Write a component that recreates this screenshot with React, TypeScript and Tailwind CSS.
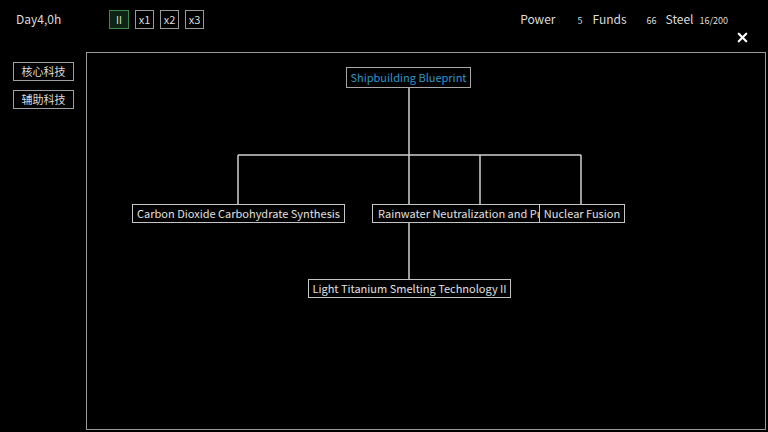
import { X } from "lucide-react";

type Node = {
  label: string;
  left: number;
  top: number;
  width: number;
  height: number;
  active?: boolean;
  align?: "left" | "center";
};

const nodes: Node[] = [
  { label: "Shipbuilding Blueprint", left: 259, top: 14, width: 125, height: 21, active: true },
  { label: "Carbon Dioxide Carbohydrate Synthesis", left: 45, top: 151, width: 213, height: 19 },
  { label: "Rainwater Neutralization and Purification", left: 285, top: 151, width: 175, height: 19, align: "left" },
  { label: "Nuclear Fusion", left: 452, top: 151, width: 86, height: 19 },
  { label: "Light Titanium Smelting Technology II", left: 221, top: 226, width: 203, height: 19 },
];

const speeds = ["x1", "x2", "x3"];

export default function App() {
  return (
    <div
      className="flex h-[432px] w-[768px] flex-col overflow-hidden bg-black text-[#dcdcdc]"
      style={{ fontFamily: '"Noto Sans CJK SC", "Noto Sans", sans-serif' }}
    >
      {/* top bar */}
      <div className="flex h-[38px] items-center">
        <span className="ml-[16px] w-[93px] text-[12px]">Day4,0h</span>
        <div className="flex gap-[6px]">
          <button className="flex h-[19px] w-[20px] items-center justify-center border border-[#3f8a4a] bg-[#0f2414] text-[10px] text-[#cfe6cf]">
            II
          </button>
          {speeds.map((s) => (
            <button
              key={s}
              className="flex h-[19px] w-[19px] items-center justify-center border border-[#9a9a9a] text-[11px]"
            >
              {s}
            </button>
          ))}
        </div>
        <div className="ml-auto mr-[40px] flex items-baseline text-[12px]">
          <span>Power</span>
          <span className="ml-[22px] text-[9px]">5</span>
          <span className="ml-[10px]">Funds</span>
          <span className="ml-[20px] text-[9px]">66</span>
          <span className="ml-[9px]">Steel</span>
          <span className="ml-[6px] text-[9px]">16/200</span>
        </div>
      </div>

      <div className="flex flex-1">
        {/* side tabs */}
        <div className="flex w-[86px] flex-col gap-[9px] pl-[13px] pt-[24px]">
          <button className="h-[19px] w-[61px] border border-[#a0a0a0] text-[11px]">核心科技</button>
          <button className="h-[19px] w-[61px] border border-[#a0a0a0] text-[11px]">辅助科技</button>
        </div>

        {/* tech tree panel */}
        <div className="relative flex-1 pt-[14px]">
          <X className="absolute right-[18px] top-[-8px] h-[15px] w-[15px] text-white" strokeWidth={3.5} />
          <div className="relative h-[378px] w-[680px] border border-[#9a9a9a]">
            <svg className="absolute left-0 top-0" width="678" height="376">
              <g stroke="#d0d0d0" strokeWidth="1.5" fill="none">
                <line x1="322" y1="34" x2="322" y2="102" />
                <line x1="151" y1="102" x2="494" y2="102" />
                <line x1="151" y1="102" x2="151" y2="151" />
                <line x1="322" y1="102" x2="322" y2="151" />
                <line x1="393" y1="102" x2="393" y2="151" />
                <line x1="494" y1="102" x2="494" y2="151" />
                <line x1="322" y1="169" x2="322" y2="226" />
              </g>
            </svg>
            {nodes.map((n) => (
              <div
                key={n.label}
                className={`absolute flex items-center overflow-hidden whitespace-nowrap border bg-black text-[11px] ${
                  n.active ? "border-[#a8a8a8] text-[#2f95cf]" : "border-[#c4c4c4] text-[#e0e0e0]"
                } ${n.align === "left" ? "justify-start pl-[5px]" : "justify-center"}`}
                style={{ left: n.left, top: n.top, width: n.width, height: n.height }}
              >
                {n.label}
              </div>
            ))}
          </div>
        </div>
      </div>
    </div>
  );
}
